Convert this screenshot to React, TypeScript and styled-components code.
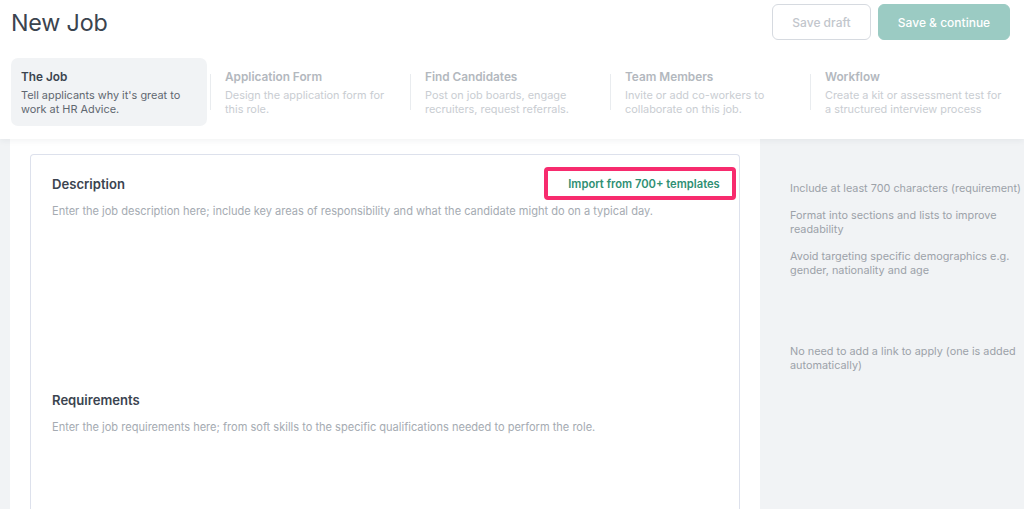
import React from "react";
import styled, { createGlobalStyle } from "styled-components";

const Global = createGlobalStyle`
  html, body { margin: 0; padding: 0; background: #f1f3f5; }
  body { font-family: "Inter", "Liberation Sans", Arial, sans-serif; -webkit-font-smoothing: antialiased; }
  * { box-sizing: border-box; }
`;

const Page = styled.div`
  width: 1024px;
  height: 509px;
  overflow: hidden;
  display: flex;
  flex-direction: column;
  background: #f1f3f5;
`;

const Header = styled.header`
  flex-shrink: 0;
  background: #ffffff;
  height: 139px;
  padding: 0 14px 0 11px;
  box-shadow: 0 2px 6px rgba(40, 50, 70, 0.06);
  position: relative;
  z-index: 1;
  display: flex;
  flex-direction: column;
`;

const TopRow = styled.div`
  display: flex;
  justify-content: space-between;
  align-items: flex-start;
  height: 58px;
`;

const Title = styled.h1`
  margin: 8px 0 0 0;
  font-size: 23.3px;
  line-height: 30px;
  font-weight: 400;
  color: #3b444f;
  letter-spacing: -0.2px;
`;

const Actions = styled.div`
  display: flex;
  gap: 7px;
  padding-top: 4px;
`;

const Button = styled.button<{ $primary?: boolean }>`
  height: 36px;
  padding: 0;
  width: ${(p) => (p.$primary ? "132px" : "99px")};
  border-radius: 6px;
  font-family: inherit;
  font-size: 12px;
  font-weight: 500;
  border: 1px solid ${(p) => (p.$primary ? "#9bcbc3" : "#d6dae0")};
  background: ${(p) => (p.$primary ? "#9bcbc3" : "#ffffff")};
  color: ${(p) => (p.$primary ? "#ffffff" : "#c2c6cc")};
`;

const Tabs = styled.div`
  display: grid;
  grid-template-columns: repeat(5, 200px);
`;

const Tab = styled.div<{ $active?: boolean }>`
  position: relative;
  width: 196px;
  height: 68px;
  padding: ${(p) => (p.$active ? "12px 10px 0 10px" : "12px 4px 0 14px")};
  border-radius: 7px;
  background: ${(p) => (p.$active ? "#f1f3f5" : "transparent")};
  &::before {
    content: "";
    display: ${(p) => (p.$active ? "none" : "block")};
    position: absolute;
    left: -1px;
    top: 16px;
    height: 36px;
    width: 1px;
    background: #e9ecef;
  }
`;

const TabTitle = styled.div<{ $active?: boolean }>`
  font-size: 11.8px;
  line-height: 15px;
  font-weight: 600;
  color: ${(p) => (p.$active ? "#3b444f" : "#b3b8be")};
  margin-bottom: 4px;
`;

const TabDesc = styled.div<{ $active?: boolean }>`
  font-size: 10.9px;
  line-height: 13.5px;
  color: ${(p) => (p.$active ? "#5f6770" : "#c9cdd2")};
`;

const Body = styled.div`
  flex: 1;
  display: flex;
  padding-left: 10px;
  min-height: 0;
`;

const Main = styled.main`
  flex: 0 0 750px;
  background: #ffffff;
  padding: 15px 20px 0 20px;
  display: flex;
`;

const Card = styled.section`
  flex: 1;
  border: 1px solid #dde1ec;
  border-bottom: none;
  border-radius: 4px 4px 0 0;
  padding: 12px 3px 0 21px;
`;

const Field = styled.div<{ $height: number }>`
  height: ${(p) => p.$height}px;
`;

const FieldHead = styled.div`
  display: flex;
  justify-content: space-between;
  align-items: center;
  height: 33px;
`;

const FieldLabel = styled.h2`
  margin: 0;
  font-size: 13.1px;
  font-weight: 600;
  color: #3b444f;
`;

const ImportBox = styled.div`
  width: 192px;
  height: 33px;
  border: 4px solid #f72b6e;
  border-radius: 4px;
  display: flex;
  align-items: center;
  justify-content: center;
  padding-left: 8px;
  font-size: 11.2px;
  font-weight: 600;
  color: #2f8f73;
`;

const Placeholder = styled.p`
  margin: 3px 0 0 0;
  font-size: 11.05px;
  line-height: 16px;
  color: #a5abb2;
`;

const Sidebar = styled.aside`
  flex: 1;
  min-width: 0;
  padding: 42px 0 0 30px;
  display: flex;
  flex-direction: column;
`;

const Tip = styled.p<{ $gap: number }>`
  margin: ${(p) => p.$gap}px 0 0 0;
  font-size: 10.85px;
  line-height: 14px;
  color: #9ca2a9;
  width: 240px;
  flex-shrink: 0;
`;

const tabs = [
  { title: "The Job", desc: "Tell applicants why it's great to work at HR Advice.", active: true },
  { title: "Application Form", desc: "Design the application form for this role." },
  { title: "Find Candidates", desc: "Post on job boards, engage recruiters, request referrals." },
  { title: "Team Members", desc: "Invite or add co-workers to collaborate on this job." },
  { title: "Workflow", desc: "Create a kit or assessment test for a structured interview process" },
];

const tips = [
  { text: "Include at least 700 characters (requirement)", gap: 0 },
  { text: "Format into sections and lists to improve readability", gap: 13 },
  { text: "Avoid targeting specific demographics e.g. gender, nationality and age", gap: 13 },
  { text: "No need to add a link to apply (one is added automatically)", gap: 67 },
];

export default function App() {
  return (
    <>
      <Global />
      <Page>
        <Header>
          <TopRow>
            <Title>New Job</Title>
            <Actions>
              <Button>Save draft</Button>
              <Button $primary>Save &amp; continue</Button>
            </Actions>
          </TopRow>
          <Tabs>
            {tabs.map((t) => (
              <Tab key={t.title} $active={t.active}>
                <TabTitle $active={t.active}>{t.title}</TabTitle>
                <TabDesc $active={t.active}>{t.desc}</TabDesc>
              </Tab>
            ))}
          </Tabs>
        </Header>
        <Body>
          <Main>
            <Card>
              <Field $height={216}>
                <FieldHead>
                  <FieldLabel>Description</FieldLabel>
                  <ImportBox>Import from 700+ templates</ImportBox>
                </FieldHead>
                <Placeholder>
                  Enter the job description here; include key areas of responsibility and what the candidate might do on a typical day.
                </Placeholder>
              </Field>
              <Field $height={140}>
                <FieldHead>
                  <FieldLabel>Requirements</FieldLabel>
                </FieldHead>
                <Placeholder>
                  Enter the job requirements here; from soft skills to the specific qualifications needed to perform the role.
                </Placeholder>
              </Field>
            </Card>
          </Main>
          <Sidebar>
            {tips.map((t) => (
              <Tip key={t.text} $gap={t.gap}>{t.text}</Tip>
            ))}
          </Sidebar>
        </Body>
      </Page>
    </>
  );
}
